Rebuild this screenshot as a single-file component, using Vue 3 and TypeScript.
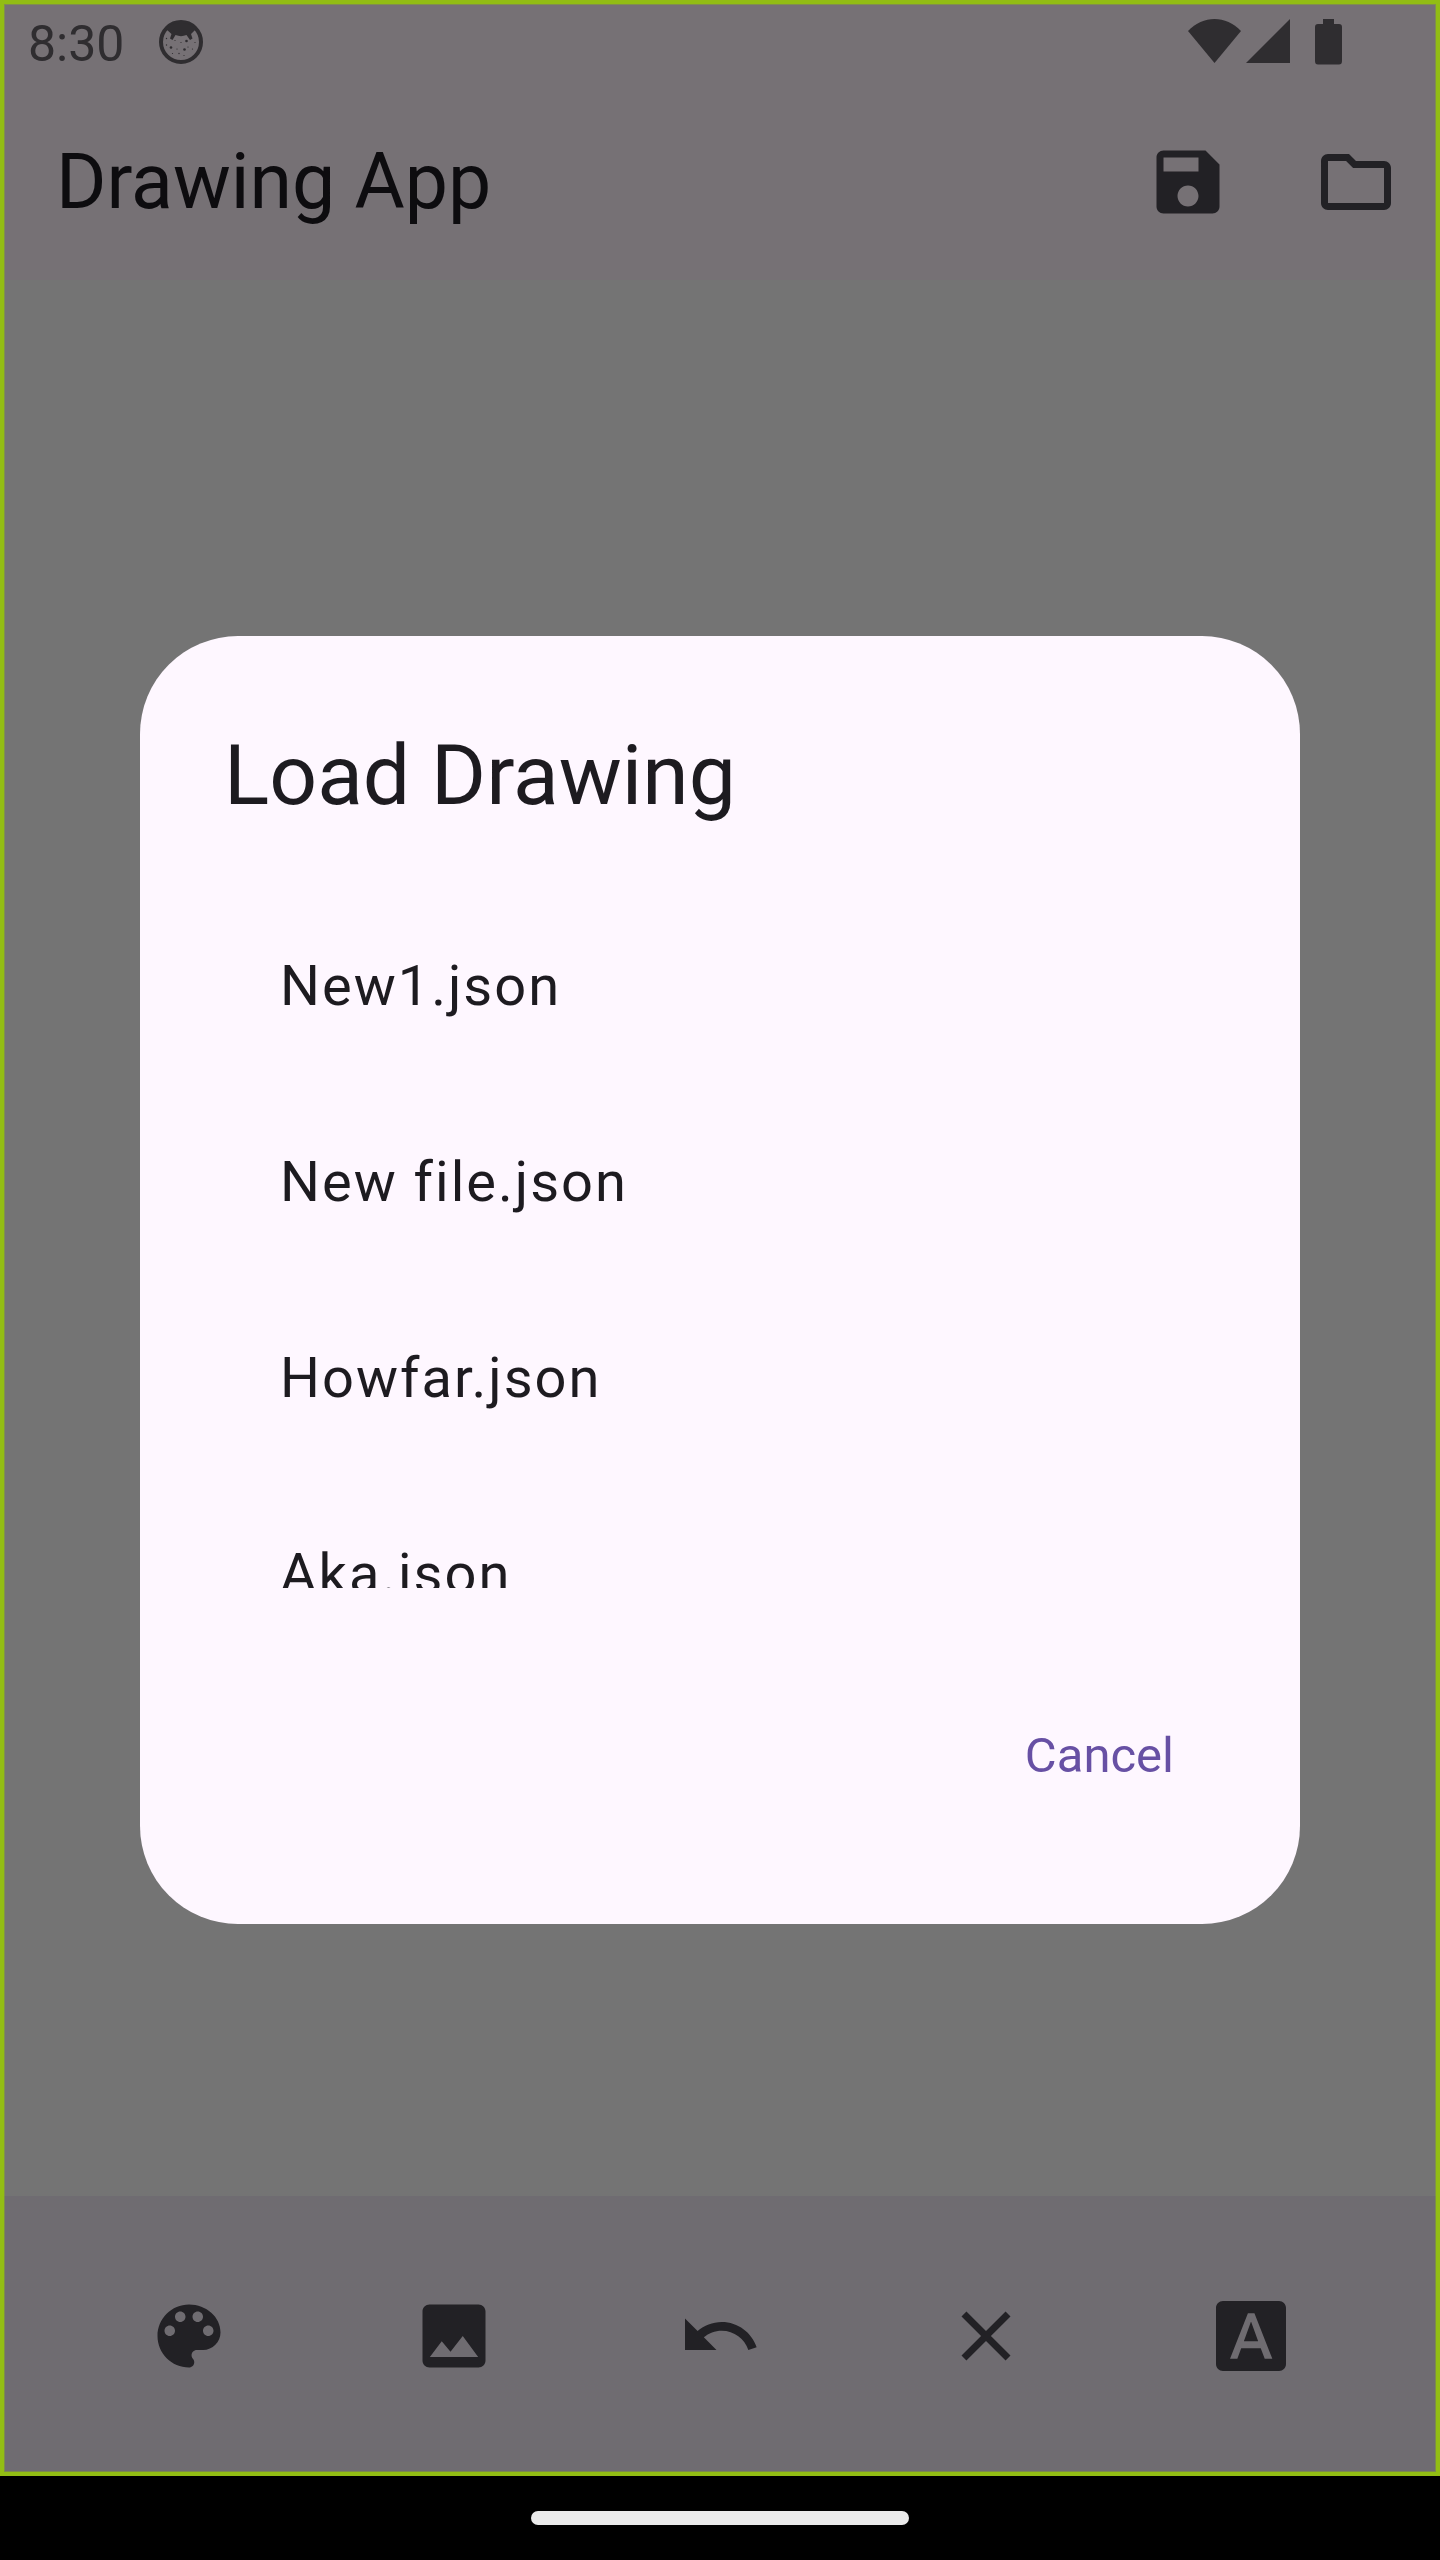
<script setup lang="ts">
interface Tool {
  name: string
  path: string
}

const files: string[] = ['New1.json', 'New file.json', 'Howfar.json', 'Aka.json']

const actions: Tool[] = [
  {
    name: 'Save drawing',
    path: 'M17 3H5c-1.11 0-2 .9-2 2v14c0 1.1.89 2 2 2h14c1.1 0 2-.9 2-2V7l-4-4zm-5 16c-1.66 0-3-1.34-3-3s1.34-3 3-3 3 1.34 3 3-1.34 3-3 3zm3-10H5V5h10v4z',
  },
  {
    name: 'Load drawing',
    path: 'M9.17 6l2 2H20v10H4V6h5.17M10 4H4c-1.1 0-1.99.9-1.99 2L2 18c0 1.1.9 2 2 2h16c1.1 0 2-.9 2-2V8c0-1.1-.9-2-2-2h-8l-2-2z',
  },
]

const tools: Tool[] = [
  {
    name: 'Colors',
    path: 'M12 3c-4.97 0-9 4.03-9 9s4.03 9 9 9c.83 0 1.5-.67 1.5-1.5 0-.39-.15-.74-.39-1.01-.23-.26-.38-.61-.38-.99 0-.83.67-1.5 1.5-1.5H16c2.76 0 5-2.24 5-5 0-4.42-4.03-8-9-8zm-5.5 9c-.83 0-1.5-.67-1.5-1.5S5.67 9 6.5 9 8 9.67 8 10.5 7.33 12 6.5 12zm3-4C8.67 8 8 7.33 8 6.5S8.67 5 9.5 5s1.5.67 1.5 1.5S10.33 8 9.5 8zm5 0c-.83 0-1.5-.67-1.5-1.5S13.67 5 14.5 5s1.5.67 1.5 1.5S15.33 8 14.5 8zm3 4c-.83 0-1.5-.67-1.5-1.5S16.67 9 17.5 9s1.5.67 1.5 1.5-.67 1.5-1.5 1.5z',
  },
  {
    name: 'Insert image',
    path: 'M19 3H5c-1.1 0-2 .9-2 2v14c0 1.1.9 2 2 2h14c1.1 0 2-.9 2-2V5c0-1.1-.9-2-2-2zM5.1 18l3.4-4.5 2.5 3 3.5-4.5 4.4 6z',
  },
  {
    name: 'Undo',
    path: 'M12.5 8c-2.65 0-5.05.99-6.9 2.6L2 7v9h9l-3.62-3.62c1.39-1.16 3.16-1.88 5.12-1.88 3.54 0 6.55 2.31 7.6 5.5l2.37-.78C21.08 11.03 17.15 8 12.5 8z',
  },
  {
    name: 'Clear',
    path: 'M19 6.41L17.59 5 12 10.59 6.41 5 5 6.41 10.59 12 5 17.59 6.41 19 12 13.41 17.59 19 19 17.59 13.41 12z',
  },
  {
    name: 'Add text',
    path: 'M20 2H4c-1.1 0-2 .9-2 2v16c0 1.1.9 2 2 2h16c1.1 0 2-.9 2-2V4c0-1.100-.9-2-2-2zM15.92 18.5l-1.14-3H9.2l-1.1 3H6.01l5.11-13h1.86l5.11 13zM12.06 7.98l-.11 0L9.96 13.5h4.09z',
  },
]
</script>

<template>
  <div class="device">
    <div class="app">
      <header>
        <div class="status">
          <time>8:30</time>
          <svg class="badge" viewBox="0 0 44 44" aria-hidden="true">
            <circle cx="22" cy="22" r="20" fill="none" stroke="currentColor" stroke-width="4" />
            <path
              d="M7 9C12 1 32 1 37 9l-5 5 1.500 4.500-2.500 1.500-3.500-5c-4 1.500-7 1.500-11 0l-3 5-2.500-1.500 1.500-4.500z"
              fill="currentColor"
            />
            <g fill="currentColor">
              <circle cx="12" cy="27.500" r="1.300" />
              <circle cx="27.500" cy="21" r="1.300" />
              <circle cx="25.500" cy="29.500" r="1.300" />
              <circle cx="18" cy="29" r=".6" />
              <circle cx="29" cy="27" r=".6" />
              <circle cx="33.500" cy="29" r=".6" />
              <circle cx="22" cy="22.500" r=".6" />
              <circle cx="16" cy="20.500" r=".6" />
              <circle cx="13.500" cy="33.500" r=".6" />
              <circle cx="20" cy="33.500" r=".7" />
              <circle cx="25" cy="35.500" r=".6" />
              <circle cx="7.500" cy="25" r=".7" />
              <circle cx="7.500" cy="18.500" r=".7" />
              <circle cx="36" cy="22.500" r=".6" />
            </g>
          </svg>
          <div class="signals">
            <svg width="54" height="46" viewBox="0 0 54 46" aria-hidden="true">
              <path d="M0 12C15-4 38-4 53 12L26.500 44z" fill="currentColor" />
            </svg>
            <svg width="44" height="46" viewBox="0 0 44 46" aria-hidden="true">
              <path d="M44 0V44H0z" fill="currentColor" />
            </svg>
            <svg class="battery" width="27" height="46" viewBox="0 0 27 46" aria-hidden="true">
              <path
                d="M8 0H19V5H24Q27 5 27 8V42Q27 45.500 24 45.500H3Q0 45.500 0 42V8Q0 5 3 5H8z"
                fill="currentColor"
              />
            </svg>
          </div>
        </div>
        <div class="toolbar">
          <h1>Drawing App</h1>
          <button v-for="a in actions" :key="a.name" type="button" class="icon" :aria-label="a.name">
            <svg viewBox="0 0 24 24"><path :d="a.path" fill="currentColor" /></svg>
          </button>
        </div>
      </header>

      <main aria-label="Canvas"></main>

      <footer>
        <button v-for="t in tools" :key="t.name" type="button" class="icon" :aria-label="t.name">
          <svg viewBox="0 0 24 24">
            <path :d="t.path" fill="currentColor" fill-rule="evenodd" />
          </svg>
        </button>
      </footer>
    </div>
    <div class="gesture"><span></span></div>

    <div class="overlay">
      <section class="dialog" role="dialog" aria-modal="true" aria-labelledby="dialog-title">
        <h2 id="dialog-title">Load Drawing</h2>
        <ul>
          <li v-for="f in files" :key="f">
            <button type="button" class="file">{{ f }}</button>
          </li>
        </ul>
        <button type="button" class="cancel">Cancel</button>
      </section>
    </div>
  </div>
</template>

<style>
body {
  margin: 0;
  background: #000;
}
</style>

<style scoped>
* {
  box-sizing: border-box;
}

.device {
  position: relative;
  display: flex;
  flex-direction: column;
  min-height: 100vh;
  background: #000;
  font-family: Roboto, 'Liberation Sans', sans-serif;
}

.app {
  position: relative;
  flex: 1;
  display: flex;
  flex-direction: column;
  background: #747474;
}

/* Focus frame drawn above the app's own surfaces */
.app::after {
  content: '';
  position: absolute;
  inset: 0;
  border: 4px solid #92bd14;
  box-shadow: inset 0 0 0 1px rgba(146, 189, 20, 0.4);
  pointer-events: none;
}

button {
  border: 0;
  padding: 0;
  background: none;
  font: inherit;
  color: inherit;
}

svg {
  display: block;
}

header {
  background: #767175;
}

.status {
  display: flex;
  align-items: center;
  height: 84px;
  padding: 0 98px 0 28px;
  color: #2f2d30;
}

time {
  padding-top: 4px;
  font-size: 50px;
  line-height: 70px;
}

.badge {
  width: 44px;
  height: 44px;
  margin-left: 35px;
}

.signals {
  display: flex;
  gap: 4px;
  margin-left: auto;
}

.battery {
  margin-left: 21px;
}

.toolbar {
  display: flex;
  align-items: center;
  height: 196px;
  padding-left: 56px;
}

h1 {
  flex: 1;
  margin: 0;
  font-size: 77px;
  font-weight: 400;
  line-height: 98px;
  color: #0d0c0f;
}

.icon {
  display: grid;
  place-items: center;
  width: 168px;
  height: 168px;
  color: #222125;
}

.icon svg {
  width: 84px;
  height: 84px;
}

main {
  flex: 1;
}

.overlay {
  position: absolute;
  inset: 0;
  display: flex;
  flex-direction: column;
  justify-content: center;
  padding: 0 140px;
}

.dialog {
  display: flex;
  flex-direction: column;
  padding: 84px;
  border-radius: 98px;
  background: #fef7ff;
  color: #1d1b20;
}

h2 {
  margin: 0 0 56px;
  font-size: 84px;
  font-weight: 400;
  line-height: 112px;
}

ul {
  height: 700px;
  margin: 0 0 84px;
  padding: 0;
  overflow: hidden;
  list-style: none;
}

.file {
  display: block;
  width: 100%;
  height: 196px;
  padding: 0 56px;
  font-size: 56px;
  line-height: 84px;
  letter-spacing: 2px;
  text-align: left;
}

.cancel {
  align-self: flex-end;
  height: 168px;
  padding: 0 42px;
  font-size: 49px;
  line-height: 70px;
  color: #6750a4;
}

footer {
  display: flex;
  align-items: center;
  justify-content: space-evenly;
  height: 280px;
  padding: 0 7px;
  background: #6f6c71;
}

.gesture {
  display: flex;
  align-items: center;
  justify-content: center;
  height: 84px;
}

.gesture span {
  width: 378px;
  height: 14px;
  border-radius: 7px;
  background: #ebebeb;
}
</style>
